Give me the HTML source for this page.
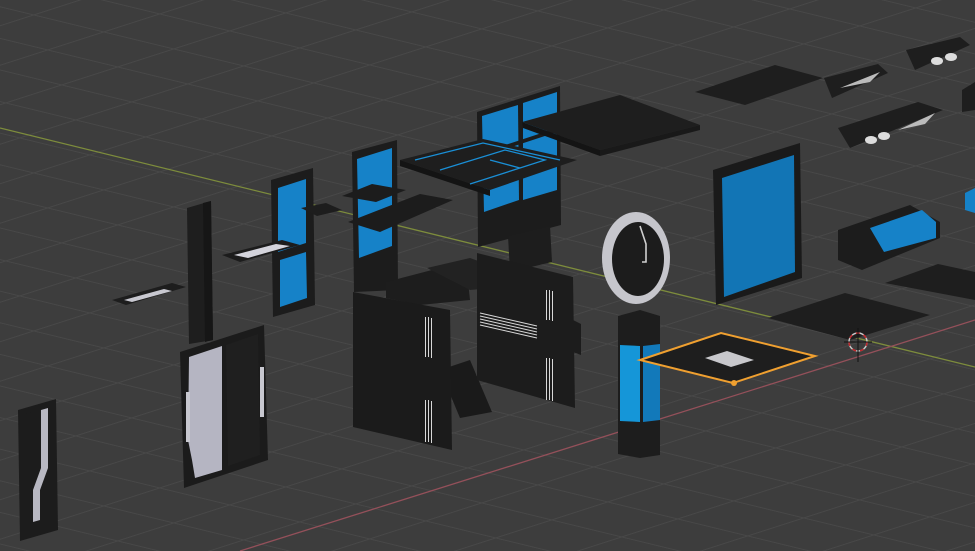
<!DOCTYPE html>
<html><head><meta charset="utf-8"><style>
html,body{margin:0;padding:0;background:#3d3d3d;overflow:hidden}
svg{display:block}
</style></head><body>
<svg width="975" height="551" viewBox="0 0 975 551" xmlns="http://www.w3.org/2000/svg">
<defs>
<pattern id="g" patternUnits="userSpaceOnUse" width="100" height="100" patternTransform="matrix(0.7 0.17 0.56 -0.18 858 342)">
<path d="M0 0H100" stroke="#484848" stroke-width="6" fill="none"/>
<path d="M0 0V100" stroke="#484848" stroke-width="5" fill="none"/>
</pattern>
</defs>
<rect width="975" height="551" fill="#3d3d3d"/>
<rect width="975" height="551" fill="url(#g)"/>
<line x1="0" y1="128" x2="975" y2="367" stroke="#7d8c3c" stroke-width="1.3"/>
<line x1="240" y1="551" x2="975" y2="320" stroke="#94505a" stroke-width="1.3"/>

<g stroke="none">
<polygon points="18,410 56,399 58,530 20,541" fill="#1c1c1c"/>
<polygon points="25,414 49,407 49,470 42,490 42,522 27,527" fill="#1c1c1c"/>
<polygon points="41,410 48,408 48,468 40,490 40,520 33,522 33,490 41,468" fill="#b8b8c2"/>
<polygon points="187,208 211,201 213,340 189,344" fill="#1e1e1e"/>
<polygon points="203,203 211,201 213,340 205,342" fill="#161616"/>
<polygon points="112,300 172,283 186,287 126,305" fill="#1d1d1d"/>
<polygon points="124,300 164,289 172,291 132,302" fill="#c8c8d0"/>
<polygon points="180,352 264,325 268,460 184,488" fill="#1b1b1b"/>
<polygon points="189,357 222,346 222,470 195,478 192,460 188,440" fill="#b5b5c2"/>
<polygon points="226,345 258,334 260,455 228,466" fill="#1f1f1f"/>
<rect x="186" y="392" width="4" height="50" fill="#c8c8d0"/>
<rect x="260" y="367" width="4" height="50" fill="#c8c8d0"/>
<polygon points="271,180 313,168 315,305 273,317" fill="#1c1c1c"/>
<polygon points="278,188 306,179 306,243 278,252" fill="#1682c8"/>
<polygon points="280,260 306,252 307,298 280,307" fill="#1682c8"/>
<polygon points="222,255 282,240 300,245 240,262" fill="#1c1c1c"/>
<polygon points="234,255 276,244 290,246 248,258" fill="#d4d4dc"/>
<polygon points="301,208 326,203 342,210 317,216" fill="#1d1d1d"/>
<polygon points="352,152 397,140 398,290 354,292" fill="#1c1c1c"/>
<polygon points="357,159 392,148 392,246 359,258" fill="#1682c8"/>
<polygon points="342,196 372,184 406,190 376,202" fill="#1c1c1c"/>
<polygon points="348,222 420,194 453,200 380,232" fill="#1c1c1c"/>
<polygon points="477,112 560,86 561,225 478,247" fill="#1c1c1c"/>
<polygon points="482,116 518,105 519,200 484,212" fill="#1682c8"/>
<polygon points="523,103 557,92 557,190 523,200" fill="#1682c8"/>
<polygon points="484,152 557,128 557,132 484,156" fill="#1c1c1c"/>
<polygon points="400,160 483,139 577,160 490,190" fill="#1e1e1e"/>
<polygon points="400,160 490,190 490,196 400,166" fill="#141414"/>
<path d="M415,160 L483,143 L560,160 M440,170 L505,150 L545,160 L470,184 M490,160 L520,168" stroke="#1a8fd6" stroke-width="1.3" fill="none"/>
<polygon points="508,236 550,226 552,262 510,272" fill="#1d1d1d"/>
<polygon points="386,282 432,270 468,282 470,300 420,305 386,298" fill="#1d1d1d"/>
<polygon points="427,268 470,258 492,266 492,288 470,290" fill="#222"/>
<polygon points="440,370 470,360 492,412 460,418" fill="#1a1a1a"/>
<polygon points="353,292 450,310 452,450 353,427" fill="#1b1b1b"/>
<g fill="#d8d8d8"><rect x="425" y="317" width="1" height="40"/><rect x="428" y="317" width="1" height="40"/><rect x="431" y="318" width="1" height="40"/><rect x="425" y="400" width="1" height="42"/><rect x="428" y="400" width="1" height="42"/><rect x="431" y="401" width="1" height="42"/></g>
<polygon points="477,253 573,277 575,408 477,380" fill="#1c1c1c"/>
<polygon points="573,320 581,324 581,355 573,352" fill="#1c1c1c"/>
<g fill="#d8d8d8"><rect x="546" y="290" width="1" height="30"/><rect x="549" y="290" width="1" height="30"/><rect x="552" y="291" width="1" height="30"/><rect x="546" y="358" width="1" height="42"/><rect x="549" y="358" width="1" height="42"/><rect x="552" y="359" width="1" height="42"/></g>
<path d="M480,313 L537,326 M480,316 L537,329 M480,319 L537,332 M480,322 L537,335 M480,325 L537,338" stroke="#d8d8d8" stroke-width="1"/>
<polygon points="522,122 620,95 700,125 600,150" fill="#1e1e1e"/>
<polygon points="522,122 600,150 600,156 523,128" fill="#141414"/>
<polygon points="600,150 700,125 700,130 600,156" fill="#191919"/>
<ellipse cx="636" cy="258" rx="34" ry="46" fill="#c6c6cc"/>
<ellipse cx="638" cy="259" rx="26" ry="37" fill="#1c1c1c"/>
<path d="M640,226 L646,244 L646,262 L642,262" stroke="#d0d0d0" stroke-width="1.6" fill="none"/>
<polygon points="618,316 640,310 660,316 660,455 640,458 618,454" fill="#1d1d1d"/>
<polygon points="620,345 640,346 640,422 620,421" fill="#1596d8"/>
<polygon points="643,346 660,344 660,420 643,422" fill="#1279ba"/>
<polygon points="640,360 721,333 815,356 733,383" fill="#1e1e1e" stroke="#f0a030" stroke-width="2"/>
<polygon points="705,358 727,351 754,360 731,367" fill="#c8c8cc"/>
<circle cx="734" cy="383" r="3" fill="#f0a030"/>
<polygon points="768,318 845,293 930,315 850,340" fill="#1e1e1e"/>
<polygon points="885,283 938,264 975,272 975,300" fill="#1e1e1e"/>
<polygon points="713,170 800,143 802,278 716,305" fill="#1a1a1a"/>
<polygon points="722,178 794,155 795,272 724,297" fill="#1275b5"/>
<polygon points="838,230 910,205 940,222 940,238 862,270 838,260" fill="#1c1c1c"/>
<polygon points="870,228 922,210 936,222 936,238 884,252" fill="#1682c8"/>
<polygon points="965,193 975,188 975,213 965,210" fill="#1682c8"/>
<polygon points="962,90 975,82 975,110 962,112" fill="#1e1e1e"/>
<polygon points="695,92 775,65 823,78 745,105" fill="#1e1e1e"/>
<polygon points="824,78 878,64 888,73 832,98" fill="#1e1e1e"/>
<polygon points="840,88 880,72 870,82" fill="#bbb"/>
<polygon points="838,128 918,102 943,110 850,148" fill="#1e1e1e"/>
<ellipse cx="871" cy="140" rx="6" ry="4" fill="#ddd"/><ellipse cx="884" cy="136" rx="6" ry="4" fill="#ddd"/>
<polygon points="898,130 935,113 925,124" fill="#bbb"/>
<polygon points="906,50 960,37 970,45 915,70" fill="#1e1e1e"/>
<ellipse cx="937" cy="61" rx="6" ry="4" fill="#ddd"/><ellipse cx="951" cy="57" rx="6" ry="4" fill="#ddd"/>
</g>
<circle cx="858" cy="342" r="9" fill="none" stroke="#c8c8c8" stroke-width="1.5"/>
<circle cx="858" cy="342" r="9" fill="none" stroke="#c0262b" stroke-width="1.5" stroke-dasharray="4 4"/>
<path d="M858,328 V362 M844,342 H872" stroke="#111" stroke-width="1"/>
</svg>
</body></html>
